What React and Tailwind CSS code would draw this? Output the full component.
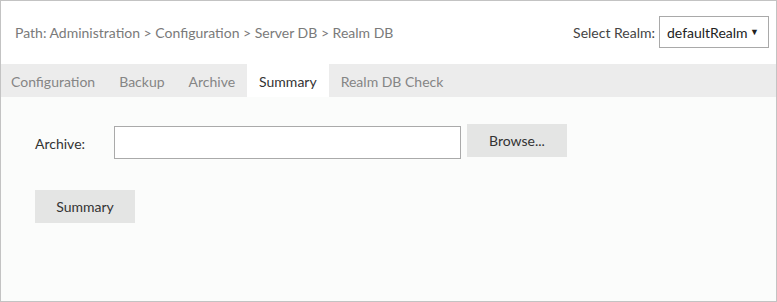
import React, { useState } from 'react';

const tabs = ['Configuration', 'Backup', 'Archive', 'Summary', 'Realm DB Check'];

export default function App() {
  const [active, setActive] = useState('Summary');

  return (
    <div className="w-[777px] h-[302px] border border-[#c3c3c3] flex flex-col text-[14px] font-['Lato','Open_Sans',sans-serif]">
      {/* header */}
      <div className="h-[63px] bg-white flex items-center justify-between pl-[14px] pr-[7px] pb-[1px]">
        <div className="text-[#7a7a7a]">Path: Administration &gt; Configuration &gt; Server DB &gt; Realm DB</div>
        <div className="flex items-center gap-[4px]">
          <span className="text-[#444]">Select Realm:</span>
          <div className="w-[110px] h-[32px] border border-[#a9a9a9] bg-white flex items-center justify-between pl-[7px] pr-[9px] text-[#222]">
            <span>defaultRealm</span>
            <span className="text-[9px] leading-none pb-[2px]">▼</span>
          </div>
        </div>
      </div>

      {/* tabs */}
      <div className="h-[33px] bg-[#ececec] flex">
        {tabs.map(t => (
          <button
            key={t}
            onClick={() => setActive(t)}
            className={`px-[12px] pt-[2px] h-full flex items-center ${active === t ? 'bg-white text-[#333]' : 'text-[#858585]'} ${t === 'Configuration' ? 'pl-[10px]' : ''}`}
          >
            {t}
          </button>
        ))}
      </div>

      {/* content */}
      <div className="flex-1 bg-[#fbfcfb] pl-[34px] pt-[27px]">
        <div className="flex items-start">
          <div className="w-[79px] pt-[9px] text-[#333]">Archive:</div>
          <input className="mt-[2px] w-[347px] h-[33px] border border-[#aaaaaa] bg-white outline-none px-2" />
          <button className="ml-[6px] w-[100px] h-[33px] bg-[#e4e5e4] text-[#333]">Browse...</button>
        </div>
        <button className="mt-[31px] w-[100px] h-[33px] bg-[#e4e5e4] text-[#333]">Summary</button>
      </div>
    </div>
  );
}
